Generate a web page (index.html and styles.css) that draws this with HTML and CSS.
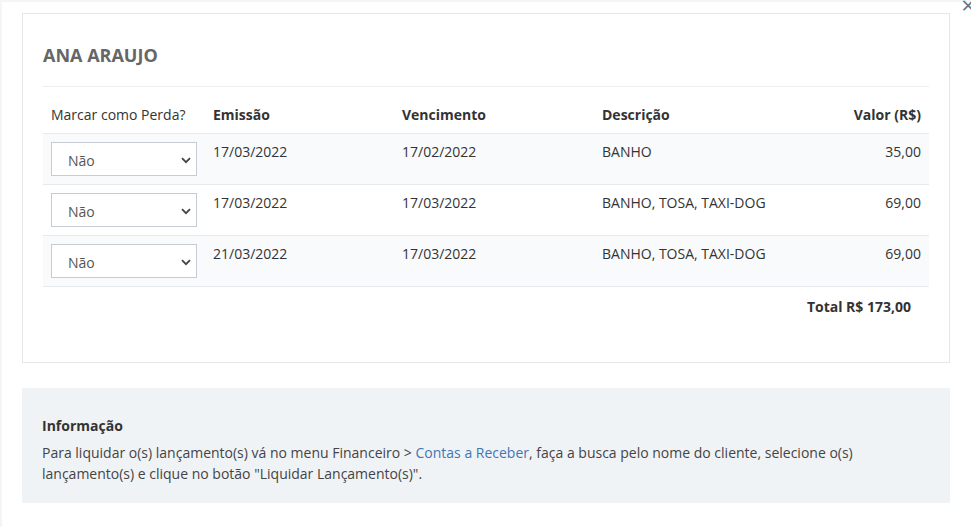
FILE: index.html
```html
<!DOCTYPE html>
<html lang="pt-BR">
<head>
<meta charset="utf-8">
<title>Ana Araujo</title>
<link rel="stylesheet" href="styles.css">
</head>
<body>
<div class="modal">
  <span class="close">&times;</span>
  <div class="card">
    <h2 class="title">ANA ARAUJO</h2>
    <table class="grid">
      <thead>
        <tr>
          <th class="c-sel plain">Marcar como Perda?</th>
          <th class="c-em">Emissão</th>
          <th class="c-ven">Vencimento</th>
          <th class="c-desc">Descrição</th>
          <th class="c-val">Valor (R$)</th>
        </tr>
      </thead>
      <tbody>
        <tr class="odd">
          <td class="c-sel"><div class="sel"><select><option>Não</option><option>Sim</option></select><svg class="chev" width="10" height="7" viewBox="0 0 10 7"><path d="M1 1.2 L5 5.2 L9 1.2" fill="none" stroke="#444" stroke-width="1.8"/></svg></div></td>
          <td>17/03/2022</td>
          <td>17/02/2022</td>
          <td>BANHO</td>
          <td class="c-val">35,00</td>
        </tr>
        <tr>
          <td class="c-sel"><div class="sel"><select><option>Não</option><option>Sim</option></select><svg class="chev" width="10" height="7" viewBox="0 0 10 7"><path d="M1 1.2 L5 5.2 L9 1.2" fill="none" stroke="#444" stroke-width="1.8"/></svg></div></td>
          <td>17/03/2022</td>
          <td>17/03/2022</td>
          <td>BANHO, TOSA, TAXI-DOG</td>
          <td class="c-val">69,00</td>
        </tr>
        <tr class="odd">
          <td class="c-sel"><div class="sel"><select><option>Não</option><option>Sim</option></select><svg class="chev" width="10" height="7" viewBox="0 0 10 7"><path d="M1 1.2 L5 5.2 L9 1.2" fill="none" stroke="#444" stroke-width="1.8"/></svg></div></td>
          <td>21/03/2022</td>
          <td>17/03/2022</td>
          <td>BANHO, TOSA, TAXI-DOG</td>
          <td class="c-val">69,00</td>
        </tr>
      </tbody>
    </table>
    <div class="total">Total R$ 173,00</div>
  </div>
  <div class="info">
    <div class="info-title">Informação</div>
    <p class="info-text">Para liquidar o(s) lançamento(s) vá no menu Financeiro &gt; <a href="#" class="link">Contas a Receber</a>, faça a busca pelo nome do cliente, selecione o(s) lançamento(s) e clique no botão "Liquidar Lançamento(s)".</p>
  </div>
</div>
</body>
</html>
```
FILE: styles.css
```css
html, body {
  margin: 0;
  padding: 0;
}
body {
  background: #f4f5f7;
  font-family: "Open Sans", "Liberation Sans", sans-serif;
  font-size: 14px;
  color: #333;
  overflow: hidden;
}
.modal {
  position: relative;
  background: #fff;
  margin: 2px 0 0 2px;
  padding: 11px 21px 40px 20px;
  min-height: 480px;
}
.close {
  position: absolute;
  right: -4px;
  top: -9px;
  font-size: 24px;
  line-height: 24px;
  color: #6b7280;
}
.card {
  border: 1px solid #e6e7e9;
  padding: 20px 20px 0 20px;
  height: 328px;
}
.title {
  margin: 0;
  font-size: 18px;
  font-weight: 700;
  color: #666;
  line-height: 24px;
  padding: 9px 0 19px 0;
  border-bottom: 1px solid #eceef1;
}
.grid {
  width: 100%;
  border-collapse: collapse;
}
.grid th {
  text-align: left;
  font-weight: 700;
  color: #333;
  padding: 18px 8px 8px 8px;
  line-height: 20px;
  border-bottom: 1px solid #e6e9ee;
}
.grid th.plain {
  font-weight: 400;
}
.grid td {
  padding: 8px 8px;
  line-height: 20px;
  vertical-align: top;
  border-bottom: 1px solid #e6e9ee;
  color: #333;
}
.grid tr.odd td {
  background: #f9fafc;
}
.c-sel { width: 146px; }
.c-em { width: 173px; }
.c-ven { width: 184px; }
.grid .c-val {
  text-align: right;
  width: 120px;
}
.sel {
  position: relative;
  width: 146px;
  height: 34px;
}
.sel select {
  appearance: none;
  -webkit-appearance: none;
  width: 146px;
  height: 34px;
  border: 1px solid #c6ccd5;
  border-radius: 0;
  background: #fff;
  font-family: "Open Sans", "Liberation Sans", sans-serif;
  font-size: 14px;
  color: #555;
  padding: 2px 0 0 16px;
  margin: 0;
  outline: none;
}
.chev {
  position: absolute;
  right: 6px;
  top: 15px;
  pointer-events: none;
}
.total {
  text-align: right;
  font-weight: 700;
  color: #333;
  padding: 10px 18px 0 0;
  line-height: 20px;
}
.info {
  margin-top: 25px;
  background: #f0f3f6;
  padding: 28px 20px 19px 20px;
}
.info-title {
  font-weight: 700;
  color: #333;
  line-height: 20px;
}
.info-text {
  margin: 6px 0 0 0;
  line-height: 21px;
  color: #444;
}
.link {
  color: #3f76b4;
  text-decoration: none;
}
```
